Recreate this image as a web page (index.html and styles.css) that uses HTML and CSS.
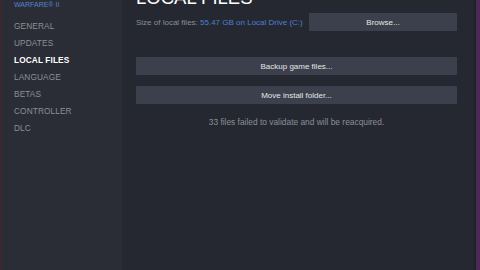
FILE: index.html
```html
<!DOCTYPE html>
<html>
<head>
<meta charset="utf-8">
<link rel="stylesheet" href="styles.css">
</head>
<body>
<div class="window">
  <div class="edge-left"></div>
  <nav class="sidebar">
    <div class="game">WARFARE® II</div>
    <ul class="menu">
      <li>GENERAL</li>
      <li>UPDATES</li>
      <li class="active">LOCAL FILES</li>
      <li>LANGUAGE</li>
      <li>BETAS</li>
      <li>CONTROLLER</li>
      <li>DLC</li>
    </ul>
  </nav>
  <main class="content">
    <h1 class="title">LOCAL FILES</h1>
    <div class="size-row">
      <span class="size-label">Size of local files: <span class="size-value">55.47 GB on Local Drive (C:)</span></span>
      <button class="btn btn-browse">Browse...</button>
    </div>
    <button class="btn btn-wide btn-backup">Backup game files...</button>
    <button class="btn btn-wide btn-move">Move install folder...</button>
    <p class="message">33 files failed to validate and will be reacquired.</p>
  </main>
  <div class="edge-right"></div>
  <div class="edge-purple"></div>
</div>
</body>
</html>
```
FILE: styles.css
```css
html, body {
  margin: 0;
  padding: 0;
  width: 480px;
  height: 270px;
  overflow: hidden;
  background: #252830;
  font-family: "Liberation Sans", Arial, sans-serif;
}
.window {
  display: flex;
  width: 480px;
  height: 270px;
}
.edge-left {
  width: 2px;
  background: #3a2830;
}
.sidebar {
  width: 120px;
  background: #2a2d35;
  box-sizing: border-box;
  padding-left: 12px;
}
.game {
  font-size: 7px;
  line-height: 9px;
  color: #5583cf;
}
.menu {
  list-style: none;
  margin: 9px 0 0 0;
  padding: 0;
}
.menu li {
  font-size: 8.3px;
  line-height: 17px;
  color: #8a8f99;
  letter-spacing: 0.1px;
}
.menu li.active {
  color: #ffffff;
  font-weight: bold;
}
.content {
  flex: 1;
  display: flex;
  flex-direction: column;
  padding: 0 17px 0 14px;
  background: #252830;
}
.title {
  margin: -11px 0 0 0;
  font-size: 18.5px;
  line-height: 18px;
  font-weight: normal;
  color: #ffffff;
  height: 18px;
}
.size-row {
  display: flex;
  align-items: center;
  margin-top: 6px;
  height: 18px;
}
.size-label {
  font-size: 8px;
  color: #8a8f99;
}
.size-value {
  color: #4f7fd4;
}
.btn {
  border: none;
  background: #3c404c;
  color: #e6e6e6;
  font-family: "Liberation Sans", Arial, sans-serif;
  font-size: 8px;
  height: 18px;
  padding: 0;
  border-radius: 1px;
}
.btn-browse {
  margin-left: auto;
  width: 148px;
}
.btn-wide {
  width: 100%;
}
.btn-backup {
  margin-top: 26px;
}
.btn-move {
  margin-top: 11px;
}
.message {
  margin: 13px 0 0 0;
  font-size: 8.4px;
  line-height: 10px;
  color: #8a8f98;
  text-align: center;
}
.edge-right {
  width: 2px;
  background: #1f2128;
}
.edge-purple {
  width: 4px;
  background: #4b2a58;
}
```
